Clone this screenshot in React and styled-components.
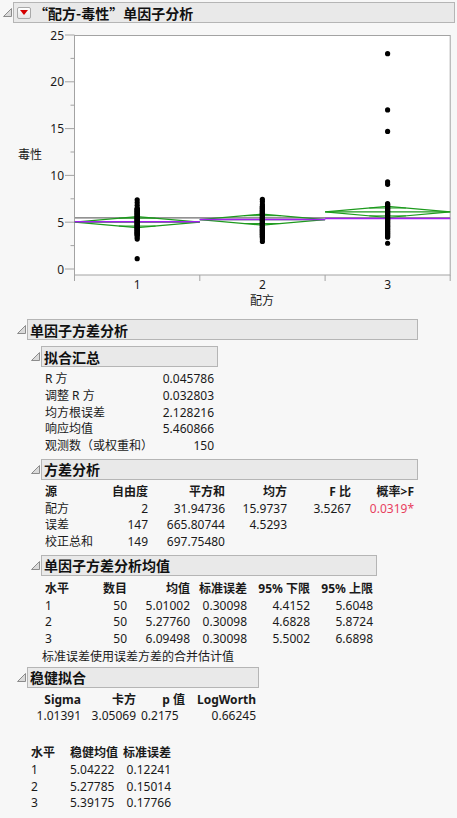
import React from "react";
import styled, { createGlobalStyle } from "styled-components";

const GlobalStyle = createGlobalStyle`
  body {
    margin: 0;
    background: #f7f7f7;
    font-family: "Segoe UI", "Noto Sans", "Noto Sans CJK SC", sans-serif;
    font-size: 12px;
    color: #1a1a1a;
  }
`;

const Page = styled.div`
  width: 457px;
  padding-top: 2px;
`;

const Section = styled.div`
  margin-top: ${(p) => p.$mt || 0}px;
`;

const Head = styled.div`
  display: flex;
  align-items: center;
  height: 21px;
`;

const ToggleIcon = styled.svg`
  display: block;
  flex: none;
`;

const TitleBox = styled.div`
  box-sizing: border-box;
  width: ${(p) => p.$w}px;
  height: 21px;
  border: 1px solid #b5b5b5;
  background: #e9e9e9;
  display: flex;
  align-items: center;
  gap: 3px;
  padding-left: ${(p) => (p.$pl != null ? p.$pl : 2)}px;
  font-family: "Noto Sans CJK SC", sans-serif;
  font-weight: bold;
  font-size: 14px;
  color: #111;
  white-space: nowrap;
`;

const Body = styled.div`
  padding-left: 14px;
`;

const MenuButton = styled.span`
  box-sizing: border-box;
  width: 14px;
  height: 12px;
  border: 1px solid #a9a9a9;
  border-radius: 2px;
  background: linear-gradient(#ffffff, #e6e6e6);
  display: flex;
  align-items: center;
  justify-content: center;

  &::after {
    content: "";
    border-left: 4px solid transparent;
    border-right: 4px solid transparent;
    border-top: 5px solid #d40000;
  }
`;

const Grid = styled.div`
  display: grid;
  grid-template-columns: ${(p) => p.$cols};
  line-height: 16.75px;
  padding-left: ${(p) => (p.$pl != null ? p.$pl : 3)}px;
  margin-top: ${(p) => (p.$mt != null ? p.$mt : 4)}px;
  white-space: nowrap;
`;

const Cell = styled.div`
  text-align: ${(p) => (p.$left ? "left" : "right")};
  padding-left: ${(p) => p.$pad || 0}px;
  font-weight: ${(p) => (p.$head ? "bold" : "normal")};
  color: ${(p) => (p.$red ? "#e8405e" : "inherit")};
`;

const Note = styled.div`
  line-height: 16.75px;
  margin-top: 1px;
  color: #1a1a1a;
`;

const ChartSvg = styled.svg`
  display: block;
  margin-top: 2px;
  font-family: "Segoe UI", "Noto Sans", "Noto Sans CJK SC", sans-serif;
  font-size: 12px;
`;

const Toggle = () => (
  <ToggleIcon width="13" height="21" viewBox="0 0 13 21">
    <path d="M3.5 14.5 L11.5 6.5 L11.5 14.5 Z" fill="#dadada" stroke="#8c8c8c" strokeWidth="1" />
  </ToggleIcon>
);

const Outline = ({ title, w, mt, button, children }) => (
  <Section $mt={mt}>
    <Head>
      <Toggle />
      <TitleBox $w={w} $pl={button ? 3 : 2}>
        {button}
        {title}
      </TitleBox>
    </Head>
    <Body>{children}</Body>
  </Section>
);

const Table = ({ cols, head, rows, mt, pl, align }) => (
  <Grid $cols={cols} $mt={mt} $pl={pl}>
    {head &&
      head.map((h, i) => (
        <Cell key={"h" + i} $head $left={align[i] === "l"}>
          {h}
        </Cell>
      ))}
    {rows.map((r, ri) =>
      r.map((c, i) => (
        <Cell
          key={ri + "-" + i}
          $left={align[i] === "l" || align[i] === "p"}
          $pad={align[i] === "p" ? 5 : 0}
          $red={typeof c === "string" && c.endsWith("*")}
        >
          {c}
        </Cell>
      ))
    )}
  </Grid>
);

/* ---------- chart ---------- */

const Y = (v) => 269 - v * 9.36;
const spread = (lo, hi, n) => Array.from({ length: n }, (_, i) => lo + ((hi - lo) * i) / (n - 1));

const groups = [
  {
    x0: 74.7, x1: 199.8, xc: 137.2, mean: 5.01002, lo: 4.4152, hi: 5.6048, robust: 5.04222,
    pts: [1.1, 7.4, 7.1, 6.8, 3.2, 3.4, ...spread(3.6, 6.5, 44)],
  },
  {
    x0: 199.8, x1: 325.1, xc: 262.4, mean: 5.2776, lo: 4.6828, hi: 5.8724, robust: 5.27785,
    pts: [7.45, 7.2, 6.9, 2.95, 3.2, ...spread(3.4, 6.7, 45)],
  },
  {
    x0: 325.1, x1: 450.2, xc: 387.6, mean: 6.09498, lo: 5.5002, hi: 6.6898, robust: 5.39175,
    pts: [23, 17, 14.7, 9.3, 9.05, 2.75, ...spread(3.4, 7.0, 44)],
  },
];

const GREEN = "#1d9a1d";

const Chart = () => {
  const yTicks = [0, 5, 10, 15, 20, 25];
  const minor = [2.5, 7.5, 12.5, 17.5, 22.5];
  return (
    <ChartSvg width="443" height="285" viewBox="14 25 443 285">
      <rect x="74.5" y="35.5" width="375.7" height="239.5" fill="#ffffff" stroke="#a3a3a3" strokeWidth="1" />
      {yTicks.map((t) => (
        <g key={t}>
          <line x1="65" x2="74.5" y1={Y(t)} y2={Y(t)} stroke="#a3a3a3" />
          <text x="64" y={Y(t)} textAnchor="end" dominantBaseline="central" fill="#1a1a1a">
            {t}
          </text>
        </g>
      ))}
      {minor.map((t) => (
        <line key={t} x1="70.5" x2="74.5" y1={Y(t)} y2={Y(t)} stroke="#a3a3a3" />
      ))}
      {[74.5, 199.8, 325.1, 450.2].map((x) => (
        <line key={x} x1={x} x2={x} y1="275" y2="281" stroke="#a3a3a3" />
      ))}
      {groups.map((g, i) => (
        <text key={i} x={g.xc} y="284" textAnchor="middle" dominantBaseline="central" fill="#1a1a1a">
          {i + 1}
        </text>
      ))}
      <text x="262" y="300" textAnchor="middle" dominantBaseline="central" fill="#1a1a1a">
        配方
      </text>
      <text x="18" y="154" dominantBaseline="central" fill="#1a1a1a">
        毒性
      </text>

      {/* grand mean */}
      <line x1="75" x2="450" y1={Y(5.460866)} y2={Y(5.460866)} stroke="#6e6e6e" strokeWidth="1.2" />

      {groups.map((g, i) => {
        const half = (g.hi - g.lo) / 2;
        const w = (g.x1 - g.x0) / 2;
        const d = half / Math.SQRT2;
        const mw = w * (1 - 1 / Math.SQRT2);
        return (
          <g key={"d" + i}>
            <polygon
              points={`${g.x0},${Y(g.mean)} ${g.xc},${Y(g.hi)} ${g.x1},${Y(g.mean)} ${g.xc},${Y(g.lo)}`}
              fill="none"
              stroke={GREEN}
              strokeWidth="1.2"
            />
            <line x1={g.x0} x2={g.x1} y1={Y(g.mean)} y2={Y(g.mean)} stroke={GREEN} strokeWidth="1.2" />
            <line x1={g.xc - mw} x2={g.xc + mw} y1={Y(g.mean + d)} y2={Y(g.mean + d)} stroke={GREEN} strokeWidth="1" />
            <line x1={g.xc - mw} x2={g.xc + mw} y1={Y(g.mean - d)} y2={Y(g.mean - d)} stroke={GREEN} strokeWidth="1" />
            <line x1={g.x0} x2={g.x1} y1={Y(g.robust)} y2={Y(g.robust)} stroke="#a31ff0" strokeWidth="1.5" />
          </g>
        );
      })}

      {groups.map((g, i) =>
        g.pts.map((v, j) => <circle key={i + "-" + j} cx={g.xc} cy={Y(v)} r="2.6" fill="#000" />)
      )}
    </ChartSvg>
  );
};

/* ---------- data ---------- */

const fitRows = [
  ["R 方", "0.045786"],
  ["调整 R 方", "0.032803"],
  ["均方根误差", "2.128216"],
  ["响应均值", "5.460866"],
  ["观测数（或权重和）", "150"],
];

const anovaHead = ["源", "自由度", "平方和", "均方", "F 比", "概率>F"];
const anovaRows = [
  ["配方", "2", "31.94736", "15.9737", "3.5267", "0.0319*"],
  ["误差", "147", "665.80744", "4.5293", "", ""],
  ["校正总和", "149", "697.75480", "", "", ""],
];

const meansHead = ["水平", "数目", "均值", "标准误差", "95% 下限", "95% 上限"];
const meansRows = [
  ["1", "50", "5.01002", "0.30098", "4.4152", "5.6048"],
  ["2", "50", "5.27760", "0.30098", "4.6828", "5.8724"],
  ["3", "50", "6.09498", "0.30098", "5.5002", "6.6898"],
];

const robustHead = ["Sigma", "卡方", "p 值", "LogWorth"];
const robustRows = [["1.01391", "3.05069", "0.2175", "0.66245"]];

const levelHead = ["水平", "稳健均值", "标准误差"];
const levelRows = [
  ["1", "5.04222", "0.12241"],
  ["2", "5.27785", "0.15014"],
  ["3", "5.39175", "0.17766"],
];

export default function App() {
  return (
    <Page>
      <GlobalStyle />
      <Outline title="“配方-毒性”单因子分析" w={442} button={<MenuButton />}>
        <Chart />

        <Outline title="单因子方差分析" w={391} mt={9}>
          <Outline title="拟合汇总" w={177} mt={6}>
            <Table cols="116px 53px" rows={fitRows} align={["l", "r"]} />
          </Outline>

          <Outline title="方差分析" w={377} mt={4}>
            <Table
              cols="55px 48px 77px 62px 64px 63px"
              head={anovaHead}
              rows={anovaRows}
              align={["l", "r", "r", "r", "r", "r"]}
            />
          </Outline>

          <Outline title="单因子方差分析均值" w={336} mt={4}>
            <Table
              cols="45px 37px 63px 57px 63px 63px"
              head={meansHead}
              rows={meansRows}
              mt={5}
              align={["l", "r", "r", "r", "r", "r"]}
            />
            <Note>标准误差使用误差方差的合并估计值</Note>
          </Outline>
        </Outline>

        <Outline title="稳健拟合" w={232} mt={1}>
          <Table
            cols="50px 55px 49px 71px"
            head={robustHead}
            rows={robustRows}
            align={["r", "r", "p", "r"]}
          />
          <Table
            cols="39px 44px 57px"
            head={levelHead}
            rows={levelRows}
            mt={20}
            align={["l", "r", "r"]}
          />
        </Outline>
      </Outline>
    </Page>
  );
}
